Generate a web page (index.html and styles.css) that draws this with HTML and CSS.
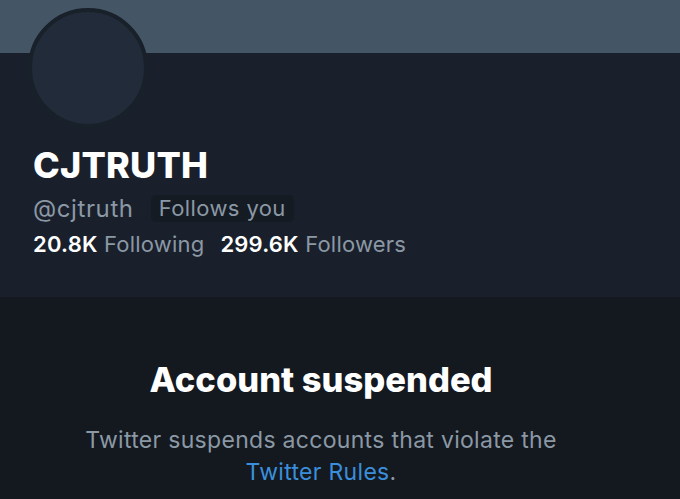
FILE: index.html
```html
<!DOCTYPE html>
<html>
<head>
<meta charset="utf-8">
<link rel="stylesheet" href="styles.css">
</head>
<body>
<div class="banner"></div>
<section class="profile">
  <div class="avatar"></div>
  <h1 class="name">CJTRUTH</h1>
  <div class="handle-row">
    <span class="handle">@cjtruth</span>
    <span class="badge">Follows you</span>
  </div>
  <div class="stats">
    <span class="stat"><b>20.8K</b> Following</span>
    <span class="stat"><b>299.6K</b> Followers</span>
  </div>
</section>
<section class="suspended">
  <h2 class="title">Account suspended</h2>
  <p class="desc">Twitter suspends accounts that violate the <a class="link">Twitter Rules</a>.</p>
</section>
</body>
</html>
```
FILE: styles.css
```css
html, body {
  margin: 0;
  padding: 0;
}
body {
  background: #14181f;
  font-family: Inter, "Liberation Sans", Arial, sans-serif;
  width: 680px;
  height: 499px;
  overflow: hidden;
}
.banner {
  height: 53px;
  background: #445566;
}
.profile {
  display: flow-root;
  background: #1a202b;
  height: 244px;
  padding-left: 33px;
  box-sizing: border-box;
}
.avatar {
  width: 112px;
  height: 112px;
  border-radius: 50%;
  background: #212b39;
  border: 4px solid #18202a;
  margin-top: -45px;
  margin-left: -5px;
}
.name {
  margin: 15px 0 0;
  color: #ffffff;
  font-size: 36px;
  font-weight: 800;
  line-height: 44px;
  letter-spacing: 0.2px;
}
.handle-row {
  display: flex;
  align-items: center;
  gap: 17px;
  margin-top: 7px;
  height: 28px;
}
.handle {
  color: #8b98a5;
  font-size: 24px;
  letter-spacing: 0.6px;
}
.badge {
  background: #151b23;
  color: #8b98a5;
  font-size: 22px;
  padding: 2px 8px;
  border-radius: 5px;
  line-height: 23px;
  letter-spacing: 0.4px;
}
.stats {
  display: flex;
  gap: 16px;
  margin-top: 9px;
  font-size: 22px;
  color: #8b98a5;
  line-height: 26px;
  letter-spacing: 0.2px;
}
.stat b {
  color: #ffffff;
  font-weight: 600;
}
.suspended {
  text-align: center;
  padding-right: 38px;
}
.title {
  margin: 62px 0 0;
  color: #ffffff;
  font-size: 34.5px;
  font-weight: 800;
  line-height: 42px;
}
.desc {
  margin: 23px auto 0;
  width: 540px;
  color: #8b98a5;
  font-size: 23px;
  letter-spacing: 0.3px;
  line-height: 32px;
}
.link {
  color: #3a8fdc;
}
```
